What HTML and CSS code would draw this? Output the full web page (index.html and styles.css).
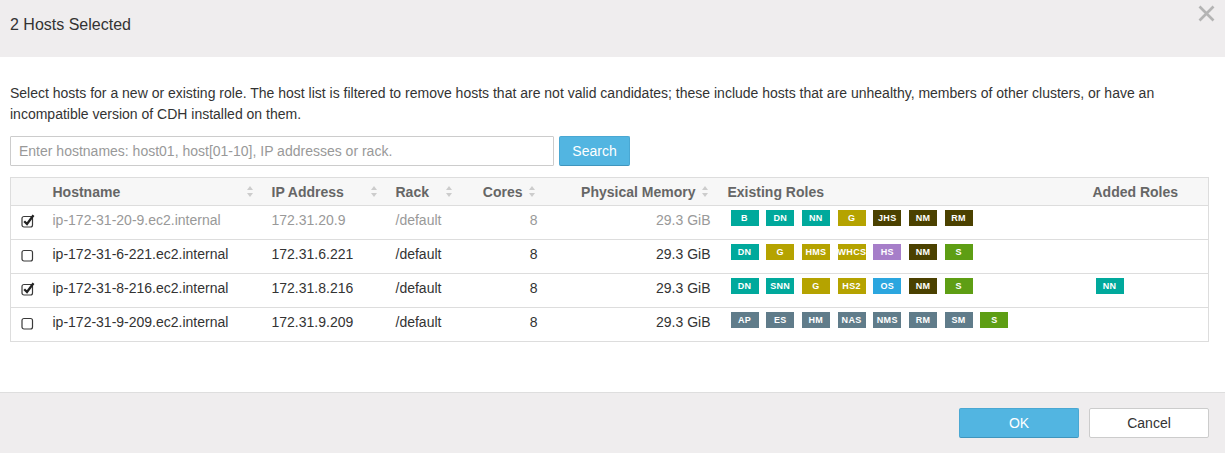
FILE: index.html
```html
<!DOCTYPE html>
<html>
<head>
<meta charset="utf-8">
<title>2 Hosts Selected</title>
<link rel="stylesheet" href="styles.css">
</head>
<body>
<div class="modal">
  <div class="modal-header">
    <h3 class="modal-title">2 Hosts Selected</h3>
    <button class="close" aria-label="Close">
      <svg width="17" height="17" viewBox="0 0 17 17"><path d="M1.5 1.5 L15.5 15.5 M15.5 1.5 L1.5 15.5" stroke="#b4b4b4" stroke-width="2.7" fill="none"/></svg>
    </button>
  </div>
  <div class="modal-body">
    <p class="intro">Select hosts for a new or existing role. The host list is filtered to remove hosts that are not valid candidates; these include hosts that are unhealthy, members of other clusters, or have an incompatible version of CDH installed on them.</p>
    <div class="search">
      <input class="search-input" type="text" placeholder="Enter hostnames: host01, host[01-10], IP addresses or rack.">
      <button class="btn btn-primary search-btn">Search</button>
    </div>
    <table class="hosts">
      <colgroup>
        <col class="c-check"><col class="c-host"><col class="c-ip"><col class="c-rack"><col class="c-cores"><col class="c-mem"><col class="c-roles"><col class="c-added">
      </colgroup>
      <thead>
        <tr>
          <th></th>
          <th><div class="th-in"><span>Hostname</span><span class="sort"></span></div></th>
          <th><div class="th-in"><span>IP Address</span><span class="sort"></span></div></th>
          <th><div class="th-in"><span>Rack</span><span class="sort"></span></div></th>
          <th class="num"><div class="th-in th-right"><span>Cores</span><span class="sort"></span></div></th>
          <th class="num"><div class="th-in th-right"><span>Physical Memory</span><span class="sort"></span></div></th>
          <th class="roles">Existing Roles</th>
          <th class="roles">Added Roles</th>
        </tr>
      </thead>
      <tbody>
        <tr class="disabled">
          <td class="chk"><span class="cb checked"><svg width="15" height="15" viewBox="0 0 15 15"><rect x="1" y="3.5" width="10.5" height="10.5" rx="2" fill="#fff" stroke="#3a3a3a" stroke-width="1.2"/><path d="M3.2 8.2 L6 11 L12.5 2.2" stroke="#222" stroke-width="2.3" fill="none"/></svg></span></td>
          <td>ip-172-31-20-9.ec2.internal</td>
          <td>172.31.20.9</td>
          <td>/default</td>
          <td class="num">8</td>
          <td class="num">29.3 GiB</td>
          <td class="roles"><div class="badges"><span class="badge teal">B</span><span class="badge teal">DN</span><span class="badge teal">NN</span><span class="badge olive">G</span><span class="badge dark">JHS</span><span class="badge dark">NM</span><span class="badge dark">RM</span></div></td>
          <td class="roles"></td>
        </tr>
        <tr>
          <td class="chk"><span class="cb"><svg width="15" height="15" viewBox="0 0 15 15"><rect x="1" y="3.5" width="10.5" height="10.5" rx="2" fill="#fff" stroke="#3a3a3a" stroke-width="1.2"/></svg></span></td>
          <td>ip-172-31-6-221.ec2.internal</td>
          <td>172.31.6.221</td>
          <td>/default</td>
          <td class="num">8</td>
          <td class="num">29.3 GiB</td>
          <td class="roles"><div class="badges"><span class="badge teal">DN</span><span class="badge olive">G</span><span class="badge olive">HMS</span><span class="badge olive">WHCS</span><span class="badge purple">HS</span><span class="badge dark">NM</span><span class="badge green">S</span></div></td>
          <td class="roles"></td>
        </tr>
        <tr>
          <td class="chk"><span class="cb checked"><svg width="15" height="15" viewBox="0 0 15 15"><rect x="1" y="3.5" width="10.5" height="10.5" rx="2" fill="#fff" stroke="#3a3a3a" stroke-width="1.2"/><path d="M3.2 8.2 L6 11 L12.5 2.2" stroke="#222" stroke-width="2.3" fill="none"/></svg></span></td>
          <td>ip-172-31-8-216.ec2.internal</td>
          <td>172.31.8.216</td>
          <td>/default</td>
          <td class="num">8</td>
          <td class="num">29.3 GiB</td>
          <td class="roles"><div class="badges"><span class="badge teal">DN</span><span class="badge teal">SNN</span><span class="badge olive">G</span><span class="badge olive">HS2</span><span class="badge blue">OS</span><span class="badge dark">NM</span><span class="badge green">S</span></div></td>
          <td class="roles"><div class="badges"><span class="badge teal">NN</span></div></td>
        </tr>
        <tr>
          <td class="chk"><span class="cb"><svg width="15" height="15" viewBox="0 0 15 15"><rect x="1" y="3.5" width="10.5" height="10.5" rx="2" fill="#fff" stroke="#3a3a3a" stroke-width="1.2"/></svg></span></td>
          <td>ip-172-31-9-209.ec2.internal</td>
          <td>172.31.9.209</td>
          <td>/default</td>
          <td class="num">8</td>
          <td class="num">29.3 GiB</td>
          <td class="roles"><div class="badges"><span class="badge slate">AP</span><span class="badge slate">ES</span><span class="badge slate">HM</span><span class="badge slate">NAS</span><span class="badge slate">NMS</span><span class="badge slate">RM</span><span class="badge slate">SM</span><span class="badge green">S</span></div></td>
          <td class="roles"></td>
        </tr>
      </tbody>
    </table>
  </div>
  <div class="modal-footer">
    <button class="btn btn-primary footer-btn">OK</button>
    <button class="btn btn-default footer-btn">Cancel</button>
  </div>
</div>
</body>
</html>
```

FILE: styles.css
```css
* { box-sizing: border-box; }
html, body { margin: 0; padding: 0; }
body {
  font-family: "Liberation Sans", Arial, sans-serif;
  font-size: 14px;
  color: #333;
  background: #fff;
}
.modal {
  display: flex;
  flex-direction: column;
  height: 453px;
  width: 1225px;
}
.modal-header {
  height: 57px;
  background: #efedee;
  display: flex;
  justify-content: space-between;
  align-items: flex-start;
  padding: 5px 10px 0 10px;
}
.modal-title {
  margin: 10px 0 0;
  font-size: 16px;
  font-weight: normal;
  line-height: 20px;
  color: #333;
}
.close {
  border: 0;
  background: none;
  padding: 0;
  width: 17px;
  height: 17px;
  display: block;
}
.close svg { display: block; }
.modal-body {
  flex: 1;
  padding: 26px 17px 0 10px;
}
.intro {
  margin: 0 0 11px;
  line-height: 21px;
}
.search {
  display: flex;
  gap: 5px;
  height: 30px;
  margin-bottom: 11px;
}
.search-input {
  width: 544px;
  height: 30px;
  border: 1px solid #ccc;
  border-radius: 1px;
  padding: 0 8px;
  font-family: inherit;
  font-size: 14px;
  color: #333;
  outline: none;
}
.search-input::placeholder { color: #999; }
.btn {
  font-family: inherit;
  font-size: 14px;
  height: 30px;
  border-radius: 2px;
  cursor: pointer;
}
.btn-primary {
  background: #52b5e1;
  border: 1px solid #4aa8d3;
  border-bottom-color: #3f95bd;
  color: #fff;
}
.btn-default {
  background: #fff;
  border: 1px solid #ccc;
  color: #333;
}
.search-btn { width: 71px; padding: 0; }

.hosts {
  width: 1198px;
  table-layout: fixed;
  border-collapse: collapse;
  border: 1px solid #ddd;
}
.c-check { width: 34px; }
.c-host { width: 219px; }
.c-ip { width: 124px; }
.c-rack { width: 75px; }
.c-cores { width: 83px; }
.c-mem { width: 173px; }
.c-roles { width: 365px; }
.c-added { width: 125px; }

.hosts th {
  background: #f7f7f7;
  color: #666;
  font-weight: bold;
  text-align: left;
  height: 28px;
  padding: 0 10px 0 8px;
  line-height: 20px;
  border-bottom: 1px solid #ddd;
  white-space: nowrap;
}
.th-in {
  display: flex;
  align-items: center;
  justify-content: space-between;
}
.th-in.th-right {
  justify-content: flex-end;
  gap: 6px;
}
.sort {
  display: inline-block;
  width: 7px;
  height: 11px;
  position: relative;
}
.sort::before, .sort::after {
  content: "";
  position: absolute;
  left: 0;
  border-left: 3.5px solid transparent;
  border-right: 3.5px solid transparent;
}
.sort::before { top: 0; border-bottom: 4px solid #ccc; }
.sort::after { bottom: 0; border-top: 4px solid #ccc; }

.hosts td {
  height: 34px;
  padding: 4px 8px 0;
  line-height: 20px;
  vertical-align: top;
  border-top: 1px solid #ddd;
  white-space: nowrap;
}
.hosts th.roles, .hosts td.roles { padding-left: 9px; }
.hosts td.num { text-align: right; }
.hosts td.chk { padding: 7px 0 0 10px; }
.cb { display: block; width: 15px; height: 15px; }
.cb svg { display: block; }
.hosts tr.disabled td { color: #999; }

.badges {
  display: flex;
  gap: 7.7px;
  margin-left: 3px;
}
.badge {
  display: block;
  width: 28px;
  height: 16px;
  line-height: 16px;
  font-size: 9px;
  font-weight: bold;
  letter-spacing: 0.3px;
  text-align: center;
  color: #fff;
  white-space: nowrap;
}
.teal { background: #00a99c; }
.olive { background: #b5a300; }
.dark { background: #4b4100; }
.purple { background: #a67ec9; }
.blue { background: #2ba6df; }
.green { background: #5e9e14; }
.slate { background: #607c8a; }

.modal-footer {
  height: 61px;
  border-top: 1px solid #dedede;
  background: #efedee;
  display: flex;
  justify-content: flex-end;
  align-items: flex-start;
  gap: 10px;
  padding: 15px 16px 0;
}
.footer-btn { width: 120px; }
```
